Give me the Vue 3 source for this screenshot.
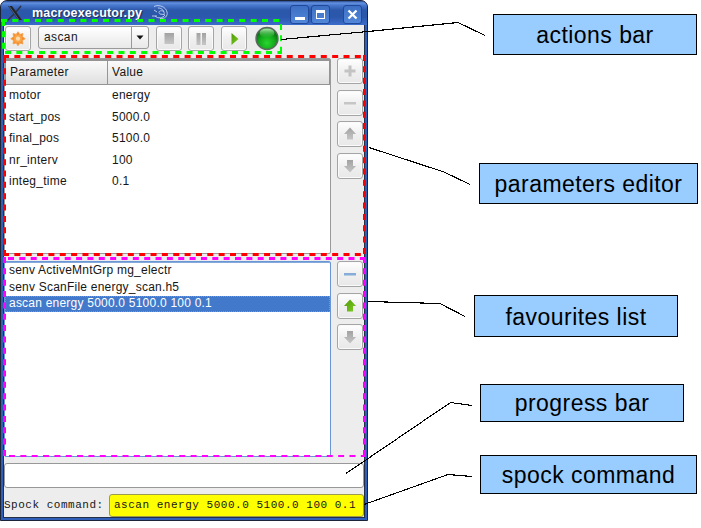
<script setup>
const params = [
  ['motor', 'energy'],
  ['start_pos', '5000.0'],
  ['final_pos', '5100.0'],
  ['nr_interv', '100'],
  ['integ_time', '0.1'],
]
const favourites = [
  'senv ActiveMntGrp mg_electr',
  'senv ScanFile energy_scan.h5',
  'ascan energy 5000.0 5100.0 100 0.1',
]
const up = 'M13 5.5 L19 12 H16 V17.5 H10 V12 H7 Z'
const down = 'M13 18.5 L19 12 H16 V6 H10 V12 H7 Z'
const plus = 'M11.5 6.5 h3 v4 h4 v3 h-4 v4 h-3 v-4 h-4 v-3 h4 Z'
const minus = 'M7 11 h12 v2.4 h-12 Z'
const paramTools = [
  { d: plus, fill: '#c3c3c3' },
  { d: minus, fill: '#c6c6c6' },
  { d: up, fill: 'url(#gray)' },
  { d: down, fill: 'url(#gray)' },
]
const favTools = [
  { d: minus, fill: '#86add8' },
  { d: up, fill: 'url(#green)' },
  { d: down, fill: 'url(#gray)' },
]
const callouts = [
  { id: 'actions', text: 'actions bar' },
  { id: 'params', text: 'parameters editor' },
  { id: 'favs', text: 'favourites list' },
  { id: 'progress-note', text: 'progress bar' },
  { id: 'spock', text: 'spock command' },
]
</script>

<template>
  <div class="stage">
    <div class="window">
      <header class="titlebar">
        <svg class="xlogo" width="18" height="18" viewBox="0 0 18 18">
          <path d="M2 2 H6 L16 16 H12 Z" fill="#20242c" />
          <path d="M15 2 L10 8 M8 10 L2 16" stroke="#30343c" stroke-width="1.6" />
          <path d="M3 2 L13 16" stroke="#7888a0" stroke-width=".6" />
        </svg>
        <span class="title">macroexecutor.py</span>
        <svg class="swirl" width="18" height="18" viewBox="0 0 18 18" fill="none" stroke="#b7c9ed" stroke-width="1">
          <path d="M2 2.5 C7 0 14 3 15 8 C16 12 13 15 8 14.5 M6 4 C10 4 13 7 12 11 M12 8 C9 5 5 8 8 10 L12 10.5 M3 12 C6 15 11 14 13 11 M0 12 H5 M5 8 L2 6" />
        </svg>
        <span class="wbtn min"><i></i></span>
        <span class="wbtn max"><i></i></span>
        <span class="wbtn close">
          <svg width="11" height="11" viewBox="0 0 11 11"><path d="M1.5 1.5 L9.5 9.5 M9.5 1.5 L1.5 9.5" stroke="#fff" stroke-width="2.3" /></svg>
        </span>
      </header>

      <div class="client">
        <div class="toolbar">
          <button class="btn gear">
            <svg width="26" height="24" viewBox="0 0 26 24">
              <path d="M13 4.7 L14.8 7.4 L18 6.5 L17.4 9.8 L20.3 11.7 L17.4 13.6 L18 17 L14.8 16.1 L13 18.8 L11.2 16.1 L8 17 L8.600 13.6 L5.700 11.7 L8.600 9.8 L8 6.5 L11.2 7.4 Z" fill="#f58f2c" stroke="#f3a04e" stroke-width=".8" stroke-linejoin="round" />
              <circle cx="13" cy="11.700" r="4" fill="#f9a548" />
              <circle cx="13" cy="11.700" r="2.100" fill="#fcdcae" />
            </svg>
          </button>
          <div class="combo">
            <span class="combo-text">ascan</span>
            <span class="arrow"><svg width="8" height="5" viewBox="0 0 8 5"><path d="M.5 .5 H7.5 L4 4.5 Z" fill="#111" /></svg></span>
          </div>
          <button class="btn stop">
            <svg width="26" height="24" viewBox="0 0 26 24"><path d="M8.500 6 h9.500 v11 h-9.500 Z" fill="url(#gray)" /></svg>
          </button>
          <button class="btn pause">
            <svg width="26" height="24" viewBox="0 0 26 24"><path d="M8.5 6 h4 v12 h-4 Z M14 6 h4 v12 h-4 Z" fill="url(#gray)" /></svg>
          </button>
          <button class="btn play">
            <svg width="26" height="24" viewBox="0 0 26 24"><path d="M10.5 6 L17.5 12 L10.5 18 Z" fill="url(#green)" /></svg>
          </button>
          <svg class="led" width="24" height="25" viewBox="0 0 24 25">
            <circle cx="12" cy="12.5" r="11" fill="url(#ledfill)" stroke="#5d6a60" stroke-width="1.4" />
            <ellipse cx="12" cy="7" rx="7.5" ry="4.5" fill="url(#shine)" />
          </svg>
        </div>

        <div class="row editor">
          <div class="table">
            <div class="thead"><span class="th first">Parameter</span><span class="th">Value</span></div>
            <div v-for="p in params" :key="p[0]" class="tr"><span class="td first">{{ p[0] }}</span><span class="td">{{ p[1] }}</span></div>
          </div>
          <div class="tools">
            <button v-for="(t, i) in paramTools" :key="i" class="btn">
              <svg width="26" height="24" viewBox="0 0 26 24"><path :d="t.d" :fill="t.fill" /></svg>
            </button>
          </div>
        </div>

        <div class="row favourites">
          <div class="list">
            <div v-for="(f, i) in favourites" :key="f" class="item" :class="{ selected: i === 2 }">{{ f }}</div>
          </div>
          <div class="tools">
            <button v-for="(t, i) in favTools" :key="i" class="btn">
              <svg width="26" height="24" viewBox="0 0 26 24"><path :d="t.d" :fill="t.fill" /></svg>
            </button>
          </div>
        </div>

        <div class="progress"></div>
        <div class="command">
          <span class="cmd-label">Spock command:</span>
          <span class="cmd-field">ascan energy 5000.0 5100.0 100 0.1</span>
        </div>
      </div>
    </div>

    <div v-for="c in callouts" :key="c.id" class="callout" :class="c.id">{{ c.text }}</div>

    <svg class="overlay" width="701" height="528" viewBox="0 0 701 528" fill="none">
      <defs>
        <linearGradient id="gray" x1="0" y1="0" x2="0" y2="1"><stop offset="0" stop-color="#a2a2a2" /><stop offset="1" stop-color="#c6c6c6" /></linearGradient>
        <linearGradient id="green" x1="0" y1="0" x2="1" y2="1"><stop offset="0" stop-color="#4e9a06" /><stop offset="1" stop-color="#80cc25" /></linearGradient>
        <radialGradient id="ledfill" cx=".5" cy=".7" r=".6"><stop offset="0" stop-color="#2ad62e" /><stop offset=".6" stop-color="#12a81b" /><stop offset="1" stop-color="#056b10" /></radialGradient>
        <linearGradient id="shine" x1="0" y1="0" x2="0" y2="1"><stop offset="0" stop-color="#b5efb3" /><stop offset="1" stop-color="#2fb936" stop-opacity=".2" /></linearGradient>
      </defs>
      <g stroke-width="3" stroke-dasharray="6 5.35">
        <g stroke="#00ff00"><path d="M1 20.5 H282" /><path d="M3.5 20 V53" /><path d="M5 52.5 H282" /><path d="M281 24 V53" stroke-width="2" /></g>
        <g stroke="#ff0000"><path d="M3 56.5 H366" /><path d="M4.5 57 V256" /><path d="M364.5 55 V256" /><path d="M3 254.5 H366" /></g>
        <g stroke="#ff00ff"><path d="M8 258.5 H366" /><path d="M4.5 257 V457" /><path d="M364.5 257 V457" /><path d="M9 456 H366" stroke-width="2" /></g>
      </g>
      <g stroke="#000" stroke-width="1.1" shape-rendering="crispEdges">
        <path d="M281 39.5 L368 31.5 L458 22.5 L485 35.5" />
        <path d="M369 147.5 L444 172 L470 184.5" />
        <path d="M368 301.5 L440 303.5 L465 316.5" />
        <path d="M346 473.5 L450.5 402.5 L472 405.5" />
        <path d="M364 504.5 L448 474.5 L472 476.5" />
      </g>
    </svg>
  </div>
</template>

<style>
body { margin: 0; background: #fff; }
</style>

<style scoped>
* { box-sizing: border-box; }
.stage { position: relative; width: 701px; height: 528px; overflow: hidden; background: #fff; font-family: "Liberation Sans", Arial, sans-serif; font-size: 12px; color: #161616; }
.window { width: 368px; height: 521px; border-radius: 7px 7px 0 0; background: #2f5fb8; border: 1px solid #1c2438; display: flex; flex-direction: column; }
.titlebar { height: 24px; flex: none; display: flex; align-items: center; padding: 0 3px 0 5px; border-radius: 6px 6px 0 0; background: linear-gradient(#274a91 0, #6592df 2px, #4a7ad0 4px, #2c58aa 9px, #2b57ac 16px, #3c6dca 24px); }
.xlogo { flex: none; }
.title { width: 111px; margin-left: 8px; color: #fff; font-weight: bold; font-size: 12.5px; letter-spacing: .2px; line-height: 24px; white-space: nowrap; text-shadow: 1px 1px 1px #142b5c; }
.swirl { margin-left: 9px; flex: none; }
.wbtn { width: 19px; height: 19px; border: 1px solid #20489b; border-radius: 3px; background: linear-gradient(#3d70c4, #5286d8); flex: none; display: flex; align-items: center; justify-content: center; margin-top: 2px; }
.min { margin-left: auto; }
.min i { width: 10px; height: 3px; background: #fff; margin-top: 8px; }
.max { margin-left: 2px; }
.max i { width: 9px; height: 9px; border: 1px solid #fff; border-top-width: 3px; }
.close { margin-left: 13px; margin-right: 2px; }
.client { flex: 1; margin: 0 2px 3px 2px; border: 1px solid #252f47; border-top: 0; background: #ededed; }
.toolbar { height: 33px; display: flex; align-items: flex-start; padding: 1px 0 0 1px; }
.btn { display: block; flex: none; width: 26px; height: 26px; padding: 0; border: 1px solid #a5a5a5; border-radius: 3px; background: linear-gradient(#fff, #f0f0f0 50%, #e8e8e8); box-shadow: inset 0 0 0 1px #fafafa; overflow: hidden; }
.btn svg { display: block; margin-left: -1px; }
.toolbar .btn { height: 25px; }
.combo { width: 111px; height: 23px; margin: 0 7px; border: 1px solid #9a9a9a; border-radius: 3px; background: linear-gradient(#fff, #e8e8e8); display: flex; align-items: center; }
.combo-text { flex: 1; padding-left: 5px; letter-spacing: .4px; line-height: 21px; }
.arrow { width: 17px; height: 21px; border-left: 1px solid #999; display: flex; align-items: center; justify-content: center; }
.pause { margin-left: 6px; }
.play { margin-left: 7px; }
.led { margin-left: 8px; }
.row { display: flex; }
.editor { height: 203px; }
.table, .list { width: 327px; height: 196px; background: #fff; border: 1px solid #9a9a9a; border-radius: 2px; flex: none; }
.thead { height: 26px; display: flex; border: 1px solid #949494; border-top-width: 2px; background: linear-gradient(#fafafa, #ededed 50%, #dfdfdf); }
.th { flex: 1; line-height: 23px; padding-left: 4px; letter-spacing: .3px; }
.th.first { flex: none; width: 102px; border-right: 1px solid #969696; padding-left: 4px; }
.tr { height: 21.5px; display: flex; line-height: 21px; letter-spacing: .25px; }
.td.first { width: 103px; padding-left: 4px; }
.td { padding-left: 4px; }
.tools { margin-left: 6px; display: flex; flex-direction: column; gap: 5.5px; }
.list { border: 1px solid #6b96d6; box-shadow: inset 0 1px 0 #86a9dc; }
.item { height: 16.5px; line-height: 16px; padding-left: 4px; letter-spacing: .22px; white-space: nowrap; }
.item.selected { height: 16px; margin-top: 1px; background: #4379ca; color: #fff; outline: 1px dotted #a59467; outline-offset: -1px; line-height: 14px; }
.favourites { height: 202px; }
.progress { height: 25px; background: #fff; border: 1px solid #989898; border-radius: 3px; }
.command { display: flex; height: 23px; margin-top: 6px; font-family: "Liberation Mono", "Courier New", monospace; font-size: 11px; letter-spacing: .52px; white-space: nowrap; }
.cmd-label { width: 105px; line-height: 22px; }
.cmd-field { flex: 1; background: #ff0; border: 1px solid #9a9a53; border-radius: 3px; line-height: 20px; padding-left: 4px; }
.callout { position: absolute; border: 1px solid #000; background: #99ccff; color: #000; font-size: 23px; letter-spacing: .45px; display: flex; align-items: center; justify-content: center; white-space: nowrap; padding-top: 2px; }
.actions { left: 493px; top: 14px; width: 204px; height: 41px; }
.params { left: 479px; top: 163px; width: 219px; height: 41px; }
.favs { left: 474px; top: 295px; width: 204px; height: 42px; }
.progress-note { left: 480px; top: 384px; width: 204px; height: 38px; padding-top: 0; }
.spock { left: 480px; top: 455px; width: 217px; height: 39px; }
.overlay { position: absolute; left: 0; top: 0; pointer-events: none; }
</style>
